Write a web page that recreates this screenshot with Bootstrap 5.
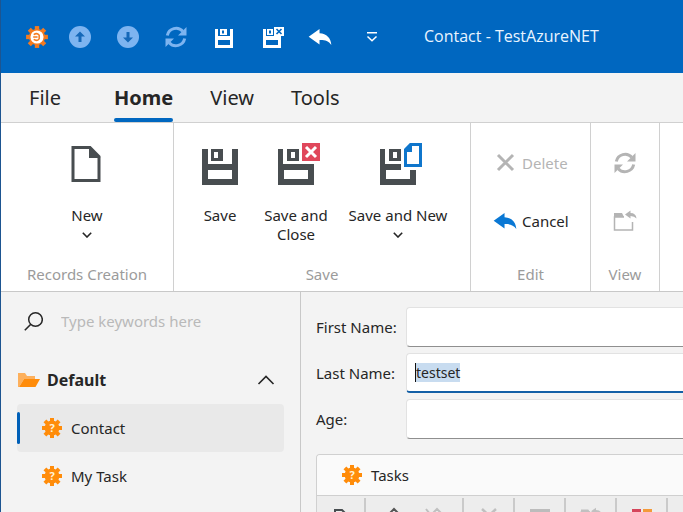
<!DOCTYPE html>
<html lang="en">
<head>
<meta charset="utf-8">
<meta name="viewport" content="width=device-width, initial-scale=1">
<title>Contact - TestAzureNET</title>
<link rel="stylesheet" href="https://cdn.jsdelivr.net/npm/bootstrap@5.3.0/dist/css/bootstrap.min.css">
<style>
  body { font-family: "Noto Sans", "Open Sans", sans-serif; font-size: 15px; line-height: 19px; color: #262626; background: #f3f3f3; }
  .app-window { border-left: 1px solid #1d5591; }
  .titlebar { height: 73px; background: #0067c0; color: #fff; padding-left: 24px; }
  .titlebar button, .rb, .tool { border: 0; background: none; padding: 0; color: inherit; line-height: 19px; }
  .quick { gap: 24px; margin-left: 19px; }
  .quick button { width: 24px; height: 24px; }
  .quick button:disabled { color: #7db4f0; }
  svg { display: block; flex: none; }
  .caption-text { margin-left: 40px; color: #e9f4ff; font-family: "Open Sans", "Noto Sans", sans-serif; font-size: 16px; }
  .tabs { height: 50px; border-bottom: 1px solid #d0d0d0; padding-left: 28px; font-size: 20px; line-height: 26px; gap: 37px; }
  .tabs a { color: #262626; text-decoration: none; height: 49px; padding-top: 12px; }
  .tabs .file-tab { margin-right: 16px; }
  .tabs a.current { font-weight: 700; position: relative; }
  .tabs a.current::after { content: ""; position: absolute; left: 0; right: 0; bottom: 0; height: 4px; border-radius: 2px; background: #0067c0; }
  .ribbon { height: 169px; background: #fff; border-bottom: 1px solid #c8c8c8; }
  .rgroup { border-right: 1px solid #d0d0d0; padding: 16px 0 7px; display: flex; flex-direction: column; justify-content: space-between; text-align: center; flex: none; }
  .g-records { width: 173px; }
  .g-save { width: 297px; }
  .g-edit { width: 120px; }
  .g-view { width: 69px; }
  .rname { color: #9b9b9b; }
  .rb.large { display: flex; flex-direction: column; align-items: center; gap: 15px; }
  .w-save { width: 64px; }
  .w-close { width: 88px; }
  .w-new { width: 116px; }
  .rb.large .chev { margin-top: 7px; }
  .rb.row-btn { display: flex; align-items: center; gap: 5px; height: 24px; }
  .rb:disabled { color: #b4b4b4; }
  .stack { padding-top: 12px; gap: 34px; }
  .navpane { width: 300px; border-right: 1px solid #c8c8c8; flex: none; padding: 15px 16px 0; }
  .search { padding-left: 7px; gap: 18px; }
  .search input { border: 0; background: none; outline: 0; min-width: 0; padding: 0; }
  .search input::placeholder { color: #b9b9b9; opacity: 1; }
  .folder { border: 0; background: none; padding: 0; font-weight: 700; font-size: 16px; color: inherit; height: 48px; margin-top: 21px; gap: 6px; }
  .navitem { color: #262626; text-decoration: none; height: 48px; padding-left: 25px; gap: 9px; border-radius: 4px; position: relative; }
  .navitem.current { background: #e9e9e9; }
  .navitem.current::before { content: ""; position: absolute; left: 0; top: 8px; width: 3px; height: 32px; border-radius: 2px; background: #0060b8; }
  .detail { padding: 15px 0 0 15px; min-width: 0; }
  .field { margin-bottom: 6px; }
  .field label { width: 90px; flex: none; }
  .field input { flex: 1; min-width: 0; height: 40px; border: 1px solid #e2e2e2; border-right: 0; border-bottom-color: #8f8f8f; border-radius: 4px 0 0 4px; background-color: #fff; padding: 0 9px; outline: 0; font-size: 15px; color: #262626; }
  .field input.active-field { border-bottom: 2px solid #135fa6; font-size: 14px; background-image: linear-gradient(#111, #111); background-size: 1px 19px; background-position: 8px 9px; background-repeat: no-repeat; }
  .field input::selection { background: #c8dcf0; color: #262626; }
  .tasks { border: 1px solid #d0d0d0; border-right: 0; border-radius: 4px 0 0 0; background: #ededed; margin-top: 15px; overflow: hidden; }
  .tasks-head { background: #fafafa; height: 41px; padding-left: 25px; gap: 9px; border-bottom: 1px solid #cfcfcf; font-size: 15px; line-height: 19px; font-weight: 400; margin: 0; }
  .toolstrip { padding-top: 2px; height: 44px; }
  .cell { border-right: 2px solid #cacaca; display: flex; justify-content: center; align-items: flex-start; flex: none; padding-top: 6px; gap: 20px; height: 40px; width: 51px; }
  .cell.first { width: 49px; }
  .cell.pair { width: 98px; }
</style>
<script src="https://cdn.jsdelivr.net/npm/bootstrap@5.3.0/dist/js/bootstrap.bundle.min.js"></script>
</head>
<body>
<svg width="0" height="0" class="position-absolute" aria-hidden="true">
  <defs>
    <g id="teeth">
      <rect x="8" y="0" width="4" height="20"/><rect x="0" y="8" width="20" height="4"/>
      <rect x="8" y="0" width="4" height="20" transform="rotate(45 10 10)"/><rect x="0" y="8" width="20" height="4" transform="rotate(45 10 10)"/>
      <circle cx="10" cy="10" r="7.4"/>
    </g>
    <symbol id="gear" viewBox="0 0 20 20">
      <use href="#teeth" fill="#ff8c0a"/>
      <text x="10" y="14" text-anchor="middle" font-size="11" font-weight="700" fill="#fff3d6">?</text>
    </symbol>
    <symbol id="refresh" viewBox="0 0 22 22">
      <g fill="none" stroke="currentColor" stroke-width="3"><path d="M2.3 9.5A9 9 0 0 1 17.8 5.3"/><path d="M19.7 12.5A9 9 0 0 1 4.2 16.7"/></g>
      <path fill="currentColor" d="M21.5 1v8.500H13zM.5 21v-8.500H9z"/>
    </symbol>
    <symbol id="undo" viewBox="0 0 24 18"><path fill="currentColor" d="M0 8.200 11.500 0v4.400C19 4.800 23.500 9.500 24 17c-3-4.500-7-5.500-12.500-5.300v4.600z"/></symbol>
    <symbol id="chev" viewBox="0 0 10 6"><path d="M.8.8 5 5 9.200.8" fill="none" stroke="currentColor" stroke-width="1.600"/></symbol>
  </defs>
</svg>

<div class="app-window vh-100 d-flex flex-column overflow-hidden">
  <header class="titlebar d-flex align-items-center flex-shrink-0">
    <svg width="24" height="24" viewBox="-1 -1 22 22"><use href="#teeth" fill="#f47b20"/><circle cx="10" cy="10" r="6" fill="#fff"/><path d="M7 7.800q3-2 5 .5v3.400q-2 2.500-5 .5M6.500 10h4" fill="none" stroke="#f47b20" stroke-width="1.400"/></svg>
    <div class="quick d-flex align-items-center">
      <button type="button" disabled aria-label="Previous record"><svg width="24" height="24" viewBox="0 0 24 24"><circle cx="12" cy="12" r="11" fill="currentColor"/><path d="M12 6.500l5 5h-3.500V17h-3v-5.500H7z" fill="#1568b8"/></svg></button>
      <button type="button" disabled aria-label="Next record"><svg width="24" height="24" viewBox="0 0 24 24"><circle cx="12" cy="12" r="11" fill="currentColor"/><path d="M12 17.500l5-5h-3.500V7h-3v5.500H7z" fill="#1568b8"/></svg></button>
      <button type="button" disabled aria-label="Refresh"><svg width="24" height="24" viewBox="0 0 24 24"><use href="#refresh" x="1" y="1" width="22" height="22"/></svg></button>
      <button type="button" aria-label="Save"><svg width="24" height="24" viewBox="0 0 24 24"><path fill="currentColor" fill-rule="evenodd" d="M3 4h3v7h12V4h3v19H3zM6 15h12v5H6zM8 4h7v6H8zM10 5.500h2v3h-2z"/></svg></button>
      <button type="button" aria-label="Save and Close"><svg width="24" height="24" viewBox="0 0 24 24"><path fill="currentColor" fill-rule="evenodd" d="M3 4h3v7h15v12H3zM6 15h12v5H6zM7 4h6v6H7zM9 5.500h2v3H9z"/><path fill="currentColor" d="M14 2h10v9H14z"/><path d="m16.500 4 5 5m0-5-5 5" stroke="#0067c0" stroke-width="1.600"/></svg></button>
      <button type="button" aria-label="Cancel"><svg width="24" height="24" viewBox="0 0 24 24"><use href="#undo" x="0" y="4" width="24" height="17"/></svg></button>
      <button type="button" aria-label="Customize toolbar" class="ms-1 d-flex align-items-center justify-content-center"><svg width="12" height="12" viewBox="0 0 12 12"><path d="M1 1.700h10M1.500 5.500 6 9.800l4.500-4.300" fill="none" stroke="currentColor" stroke-width="1.500"/></svg></button>
    </div>
    <div class="caption-text">Contact - TestAzureNET</div>
  </header>

  <nav class="tabs d-flex flex-shrink-0" aria-label="Ribbon">
    <a href="#file" class="file-tab">File</a>
    <a href="#home" class="current" aria-current="page">Home</a>
    <a href="#view">View</a>
    <a href="#tools">Tools</a>
  </nav>

  <section class="ribbon d-flex flex-shrink-0 overflow-hidden">
    <div class="rgroup g-records">
      <div class="d-flex justify-content-center">
        <button class="rb large" type="button">
          <svg width="48" height="52" viewBox="0 0 48 52"><path d="M10 8.500h17l9 9v24H10z" fill="none" stroke="#484d50" stroke-width="3"/><path d="M26 7l11.500 12H26z" fill="#484d50"/></svg>
          <span>New<svg class="chev mx-auto" width="10" height="6"><use href="#chev"/></svg></span>
        </button>
      </div>
      <div class="rname">Records Creation</div>
    </div>
    <div class="rgroup g-save">
      <div class="d-flex justify-content-center">
        <button class="rb large w-save" type="button">
          <svg width="48" height="52" viewBox="0 0 48 52"><path fill="#484d50" fill-rule="evenodd" d="M6 10h6v15h24V10h6v36H6zM12 31h24v9H12zM15 10h12v12H15zM18 13h4v6h-4z"/></svg>
          <span>Save</span>
        </button>
        <button class="rb large w-close" type="button">
          <svg width="48" height="52" viewBox="0 0 48 52"><path fill="#484d50" fill-rule="evenodd" d="M6 10h5v15h31v21H6zM12 31h24v9H12zM15 10h12v12H15zM19 13h4v6h-4z"/><path fill="#e0475b" d="M30 4h18v18H30z"/><path d="m34 8 10 10m0-10L34 18" stroke="#fff" stroke-width="3"/></svg>
          <span>Save and<br>Close</span>
        </button>
        <button class="rb large w-new" type="button">
          <svg width="48" height="52" viewBox="0 0 48 52"><path fill="#484d50" fill-rule="evenodd" d="M6 10h5v15h16v6H12v9h24v-9h6v15H6zM15 10h12v12H15zM19 13h4v6h-4z"/><path d="M36.500 5.500h10v21h-15v-16z" fill="#fff" stroke="#0f76cc" stroke-width="3"/><path d="M38 5v8h-8z" fill="#0f76cc"/></svg>
          <span>Save and New<svg class="chev mx-auto" width="10" height="6"><use href="#chev"/></svg></span>
        </button>
      </div>
      <div class="rname">Save</div>
    </div>
    <div class="rgroup g-edit">
      <div class="stack d-flex flex-column ps-4">
        <button class="rb row-btn" type="button" disabled><svg width="22" height="22" viewBox="0 0 22 22"><path d="m3 3 15 15m0-15L3 18" stroke="currentColor" stroke-width="3"/></svg>Delete</button>
        <button class="rb row-btn" type="button"><svg width="22" height="20" color="#0a78d4" overflow="visible"><use href="#undo" x="-2" y="2" width="24" height="17"/></svg>Cancel</button>
      </div>
      <div class="rname">Edit</div>
    </div>
    <div class="rgroup g-view">
      <div class="stack d-flex flex-column align-items-center">
        <button class="rb row-btn" type="button" disabled aria-label="Refresh"><svg width="22" height="22"><use href="#refresh"/></svg></button>
        <button class="rb row-btn" type="button" disabled aria-label="Open related record"><svg width="24" height="22" viewBox="0 0 24 22"><path d="M11 7H1.500v13h18v-8" fill="none" stroke="currentColor" stroke-width="1.500"/><path d="M1 3h8l2 4H1zM12 4.500l5.500-4V3q5.500 0 6 5.500-2-2.500-6-2.500v2.500z" fill="currentColor"/></svg></button>
      </div>
      <div class="rname">View</div>
    </div>
  </section>

  <div class="d-flex flex-grow-1 overflow-hidden">
    <aside class="navpane">
      <div class="search d-flex align-items-center">
        <svg width="19" height="28" viewBox="0 0 19 28"><circle cx="11.500" cy="12.500" r="6.800" fill="none" stroke="#262626" stroke-width="1.500"/><path d="m6.800 17.300-6 6" stroke="#262626" stroke-width="1.600"/></svg>
        <input class="flex-grow-1" type="search" placeholder="Type keywords here" aria-label="Search">
      </div>
      <button type="button" class="folder d-flex align-items-center w-100" aria-expanded="true">
        <svg width="24" height="20" viewBox="0 0 24 20"><path d="M1 3h7l2 3h8v3H7L2 17H1z" fill="#fdb05c"/><path d="M7 9h16l-4.500 8H2z" fill="#ff8c0a"/></svg>
        <span>Default</span>
        <svg class="ms-auto me-2" width="19" height="10" viewBox="0 0 19 10"><path d="m1.500 9 7.500-7.500L16.500 9" fill="none" stroke="#262626" stroke-width="1.600"/></svg>
      </button>
      <nav aria-label="Default">
        <a href="#contact" class="navitem current d-flex align-items-center" aria-current="page"><svg width="20" height="20"><use href="#gear"/></svg>Contact</a>
        <a href="#task" class="navitem d-flex align-items-center"><svg width="20" height="20"><use href="#gear"/></svg>My Task</a>
      </nav>
    </aside>

    <main class="detail flex-grow-1">
      <form>
        <div class="field d-flex align-items-center"><label for="first">First Name:</label><input id="first" type="text"></div>
        <div class="field d-flex align-items-center"><label for="last">Last Name:</label><input id="last" class="active-field" type="text" value="testset"></div>
        <div class="field d-flex align-items-center"><label for="age">Age:</label><input id="age" type="text"></div>
      </form>
      <section class="tasks">
        <h2 class="tasks-head d-flex align-items-center"><svg width="20" height="20"><use href="#gear"/></svg>Tasks</h2>
        <div class="toolstrip d-flex">
          <div class="cell first"><button class="tool" type="button" aria-label="New"><svg width="16" height="20" viewBox="0 0 16 20"><path d="M2 6h7l4 4v9H2z" fill="none" stroke="#484d50" stroke-width="2"/></svg></button></div>
          <div class="cell pair"><button class="tool" type="button" aria-label="Link"><svg width="20" height="20" viewBox="0 0 20 20"><path d="m5 10 5-5 5 5-5 5z" fill="none" stroke="#555" stroke-width="2"/></svg></button><button class="tool" type="button" disabled aria-label="Unlink"><svg width="20" height="20" viewBox="0 0 20 20"><path d="m8 10 5-5 5 5-5 5M2 5l4 5" fill="none" stroke="#c0c0c0" stroke-width="2"/></svg></button></div>
          <div class="cell"><button class="tool" type="button" disabled aria-label="Delete"><svg width="20" height="20" viewBox="0 0 20 20"><path d="m3 5 14 13m0-13L3 18" stroke="#c0c0c0" stroke-width="2.500"/></svg></button></div>
          <div class="cell"><button class="tool" type="button" disabled aria-label="Edit"><svg width="20" height="20" viewBox="0 0 20 20"><path d="M1 6h18v12H1z" fill="none" stroke="#bcbcbc" stroke-width="2"/><path d="M0 5h20v4H0z" fill="#bcbcbc"/></svg></button></div>
          <div class="cell"><button class="tool" type="button" disabled aria-label="Open"><svg width="22" height="20" viewBox="0 0 24 22"><path d="M11 9H1.500v13h18v-8" fill="none" stroke="#c0c0c0" stroke-width="2"/><path d="M1 6h8l2 3H1zM12 8l5.500-4v2.500q5.500 0 6 4.500h-6z" fill="#c0c0c0"/></svg></button></div>
          <div class="cell"><button class="tool" type="button" aria-label="Views"><svg width="20" height="20" viewBox="0 0 20 20"><path d="M0 5h9v6H0z" fill="#d5455b"/><path d="M11 5h9v6h-9z" fill="#f39a3a"/><path d="M0 13h9v6H0z" fill="#3a7bc0"/></svg></button></div>
        </div>
      </section>
    </main>
  </div>
</div>
<script>
  const last = document.getElementById('last');
  last.focus({ preventScroll: true });
  last.setSelectionRange(0, last.value.length);
</script>
</body>
</html>
